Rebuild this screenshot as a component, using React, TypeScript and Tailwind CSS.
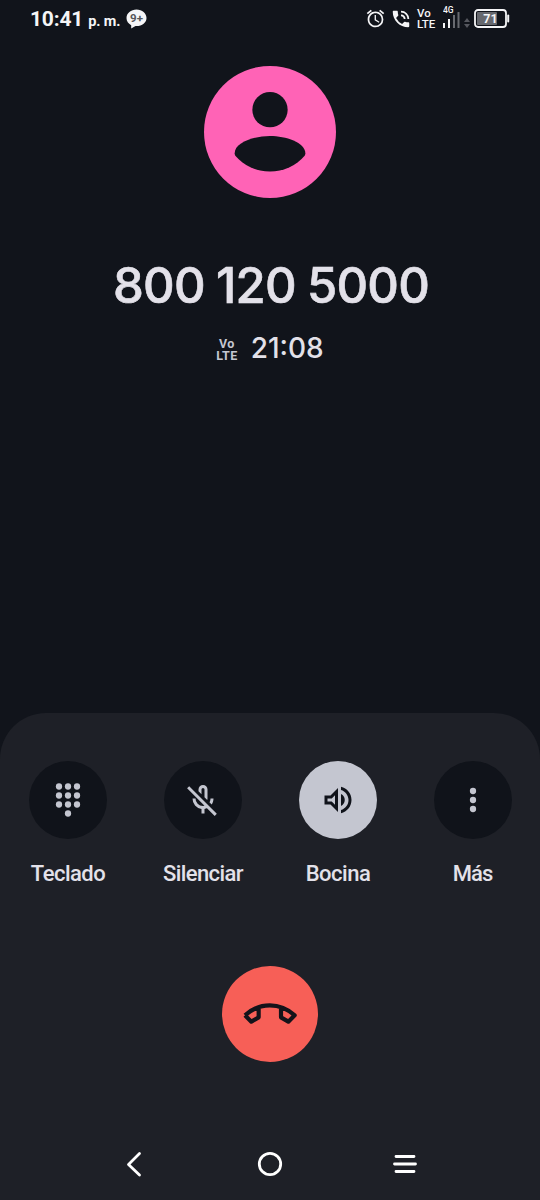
import React from "react";

type Action = {
	label: string;
	icon: React.ReactNode;
	active?: boolean;
	labelClass: string;
};

const KeypadIcon = () => (
	<svg className="size-9" viewBox="0 0 24 24" fill="currentColor">
		{[3, 9, 15].map((y) => [6, 12, 18].map((x) => <circle key={`${x}-${y}`} cx={x} cy={y} r="2.1" />))}
		<circle cx="12" cy="21" r="2.1" />
	</svg>
);

const MicOffIcon = () => (
	<svg className="size-9" viewBox="0 -960 960 960" fill="currentColor">
		<path d="m710-362-58-58q14-23 21-48t7-52h80q0 44-13 83.5T710-362ZM480-594Zm112 112-72-72v-206q0-17-11.5-28.5T480-800q-17 0-28.5 11.5T440-760v126l-80-80v-46q0-50 35-85t85-35q50 0 85 35t35 85v240q0 11-2.5 20t-5.5 18ZM440-120v-123q-104-14-172-93t-68-184h80q0 83 57.5 141.5T480-320q34 0 64.5-10.5T600-360l57 57q-29 23-63.5 39T520-243v123h-80Zm352 64L56-792l56-56 736 736-56 56Z" />
	</svg>
);

const SpeakerIcon = () => (
	<svg className="size-9" viewBox="0 0 24 24" fill="currentColor">
		<path d="M3 9v6h4l5 5V4L7 9H3zm7-.17v6.34L7.83 13H5v-2h2.83L10 8.83zM16.5 12A4.5 4.5 0 0 0 14 7.97v8.05c1.48-.73 2.5-2.25 2.5-4.02zM14 3.23v2.06c2.89.86 5 3.54 5 6.71s-2.11 5.85-5 6.71v2.06c4.01-.91 7-4.49 7-8.77 0-4.28-2.99-7.86-7-8.77z" />
	</svg>
);

const MoreIcon = () => (
	<svg className="size-9" viewBox="0 0 24 24" fill="currentColor">
		<circle cx="12" cy="6" r="2.1" />
		<circle cx="12" cy="12" r="2.1" />
		<circle cx="12" cy="18" r="2.1" />
	</svg>
);

const actions: Action[] = [
	{ label: "Teclado", icon: <KeypadIcon />, labelClass: "pl-px tracking-[-0.5px]" },
	{ label: "Silenciar", icon: <MicOffIcon />, labelClass: "pl-px tracking-[-0.6px]" },
	{ label: "Bocina", icon: <SpeakerIcon />, active: true, labelClass: "pl-px tracking-[-0.5px]" },
	{ label: "Más", icon: <MoreIcon />, labelClass: "tracking-[-0.9px]" },
];

const StatusBar = () => (
	<header className="flex h-[37px] items-center justify-between px-[30px] font-['Roboto',sans-serif] text-[#f5f5f7]">
		<div className="flex items-center">
			<div className="flex items-baseline pt-px">
				<span className="text-[21px] font-bold leading-none tracking-[-0.2px]">10:41</span>
				<span className="ml-[5px] text-[14.5px] font-bold leading-none tracking-[-0.1px]">p. m.</span>
			</div>
			<svg className="ml-[6px] h-5 w-[21px]" viewBox="0 0 21 20">
				<path d="M10.5.5C5 .5.5 4.100.5 9c0 3 1.800 5.700 4.700 7.200v3.300l4.300-2.400h1c5.700 0 10-3.500 10-8.100S16.200.5 10.500.5z" fill="#f5f5f7" />
				<text x="10.500" y="13" textAnchor="middle" fontSize="11.500" fontWeight="700" fill="#55565a">
					9+
				</text>
			</svg>
		</div>

		<div className="flex items-center">
			<svg className="size-[21px]" viewBox="0 0 24 24" fill="currentColor">
				<path d="M22 5.720l-4.600-3.860-1.290 1.530 4.600 3.860L22 5.720zM7.880 3.390L6.600 1.860 2 5.710l1.290 1.530 4.590-3.850zM12.500 8H11v6l4.750 2.850.75-1.230-4-2.370V8zM12 4c-4.970 0-9 4.030-9 9s4.020 9 9 9a9 9 0 0 0 0-18zm0 16c-3.870 0-7-3.130-7-7s3.130-7 7-7 7 3.130 7 7-3.130 7-7 7z" />
			</svg>
			<svg className="ml-[4px] size-[22px]" viewBox="0 0 24 24" fill="currentColor">
				<path d="M20 15.500c-1.250 0-2.450-.2-3.570-.57a1.020 1.020 0 0 0-1.020.24l-2.200 2.200a15.050 15.050 0 0 1-6.590-6.590l2.200-2.210a.96.96 0 0 0 .25-1A11.360 11.360 0 0 1 8.500 4c0-.55-.45-1-1-1H4c-.55 0-1 .45-1 1 0 9.390 7.610 17 17 17 .55 0 1-.45 1-1v-3.500c0-.55-.45-1-1-1zM19 12h2a9 9 0 0 0-9-9v2c3.870 0 7 3.130 7 7zm-4 0h2c0-2.760-2.240-5-5-5v2c1.660 0 3 1.340 3 3z" />
			</svg>
			<div className="ml-[5px] w-5 text-[11.5px] font-medium leading-[11px]">
				<div>Vo</div>
				<div>LTE</div>
			</div>
			<svg className="ml-[6px] h-[26px] w-7" viewBox="0 0 28 26">
				<text x="0" y="6.500" fontSize="8.500" fontWeight="500" fill="currentColor">
					4G
				</text>
				<rect x="0" y="17" width="2" height="5" fill="currentColor" />
				<rect x="5" y="13" width="2" height="9" fill="currentColor" />
				<rect x="10" y="9" width="2" height="13" fill="#686a70" />
				<rect x="14.500" y="6" width="2" height="16" fill="#686a70" />
				<path d="M21 16l3-4 3 4zM21 18l3 4 3-4z" fill="#55575e" />
			</svg>
			<svg className="ml-[3px] h-[19px] w-9" viewBox="0 0 36 19">
				<rect x="1" y="1" width="31" height="17" rx="3" fill="none" stroke="currentColor" strokeWidth="1.800" />
				<rect x="3" y="3" width="20" height="13" rx="1" fill="#66686e" />
				<path d="M34.200 6.500v6" stroke="currentColor" strokeWidth="2" strokeLinecap="round" />
				<text x="16.500" y="14" textAnchor="middle" fontSize="12.500" fontWeight="700" fill="currentColor">
					71
				</text>
			</svg>
		</div>
	</header>
);

const Avatar = () => (
	<svg className="size-[132px]" viewBox="27 33 396 396">
		<circle cx="225" cy="231" r="198" fill="#ff63b6" />
		<circle cx="225" cy="164" r="53" fill="#11141b" />
		<path d="M119 295C119 262 178 243 225 243S331 262 331 295Q331 299 329 302A137 137 0 0 1 121 302Q119 299 119 295Z" fill="#11141b" />
	</svg>
);

const CallInfo = () => (
	<section className="flex h-[676px] flex-col items-center pt-[29px]">
		<Avatar />
		<h1 className="mt-[58px] whitespace-nowrap pl-[2px] font-['Inter',sans-serif] text-[49px] font-medium leading-[60px] tracking-[-0.8px] [-webkit-text-stroke:0.6px] [word-spacing:-1px]">
			800 120 5000
		</h1>
		<div className="mt-[12px] flex items-center gap-[13px]">
			<div className="pt-[3px] text-center font-['Roboto',sans-serif] text-[12.5px] font-bold leading-[12px] tracking-[0.4px] text-[#c5c7d1]">
				<div>Vo</div>
				<div>LTE</div>
			</div>
			<span className="font-['Inter',sans-serif] text-[28px] font-medium leading-[40px]">21:08</span>
		</div>
	</section>
);

const ActionButton = ({ label, icon, active, labelClass }: Action) => (
	<div className="flex flex-col items-center">
		<button
			className={`flex size-[78px] items-center justify-center rounded-full ${
				active ? "bg-[#c4c6d0] text-[#10131a]" : "bg-[#10131a] text-[#c4c6d0]"
			}`}
		>
			{icon}
		</button>
		<span className={`mt-[21px] whitespace-nowrap text-[22px] font-medium leading-7 ${labelClass}`}>{label}</span>
	</div>
);

const EndCallButton = () => (
	<button className="flex size-24 items-center justify-center rounded-full bg-[#f75f57]">
		<svg className="h-[30px] w-[60px]" viewBox="91 130 180 90" fill="none" stroke="#14131a" strokeWidth="12.500" strokeLinejoin="round">
			<path d="M106 179Q139 149 180.500 149T255 179L236 198L214 185V156M106 179L125 198L147 185V156" />
		</svg>
	</button>
);

const NavBar = () => (
	<nav className="grid h-[72px] grid-cols-3 items-center justify-items-center px-[67px] text-white">
		<svg className="h-7 w-5" viewBox="1 0 20 28" fill="none" stroke="currentColor" strokeWidth="2.800" strokeLinecap="round" strokeLinejoin="round">
			<path d="M15.500 3.500L4.500 14.500L15.500 25" />
		</svg>
		<svg className="size-7" viewBox="0 0 28 28" fill="none" stroke="currentColor" strokeWidth="2.800">
			<circle cx="14" cy="14" r="10.700" />
		</svg>
		<svg className="size-7" viewBox="0 0 28 28" fill="none" stroke="currentColor" strokeWidth="2.800" strokeLinecap="round">
			<path d="M5 6.500h18M3.500 14h21M5 21.500h18" />
		</svg>
	</nav>
);

const App = () => {
	return (
		<main className="flex h-[1200px] w-[540px] flex-col overflow-hidden bg-[#11141b] font-['Roboto',sans-serif] text-[#e3e1e9]">
			<StatusBar />
			<CallInfo />
			<section className="flex flex-1 flex-col rounded-t-[46px] bg-[#1e2027] pt-12">
				<div className="grid grid-cols-4">
					{actions.map((action) => (
						<ActionButton key={action.label} {...action} />
					))}
				</div>
				<div className="mt-[78px] flex justify-center">
					<EndCallButton />
				</div>
				<div className="mt-auto">
					<NavBar />
				</div>
			</section>
		</main>
	);
};

export default App;
